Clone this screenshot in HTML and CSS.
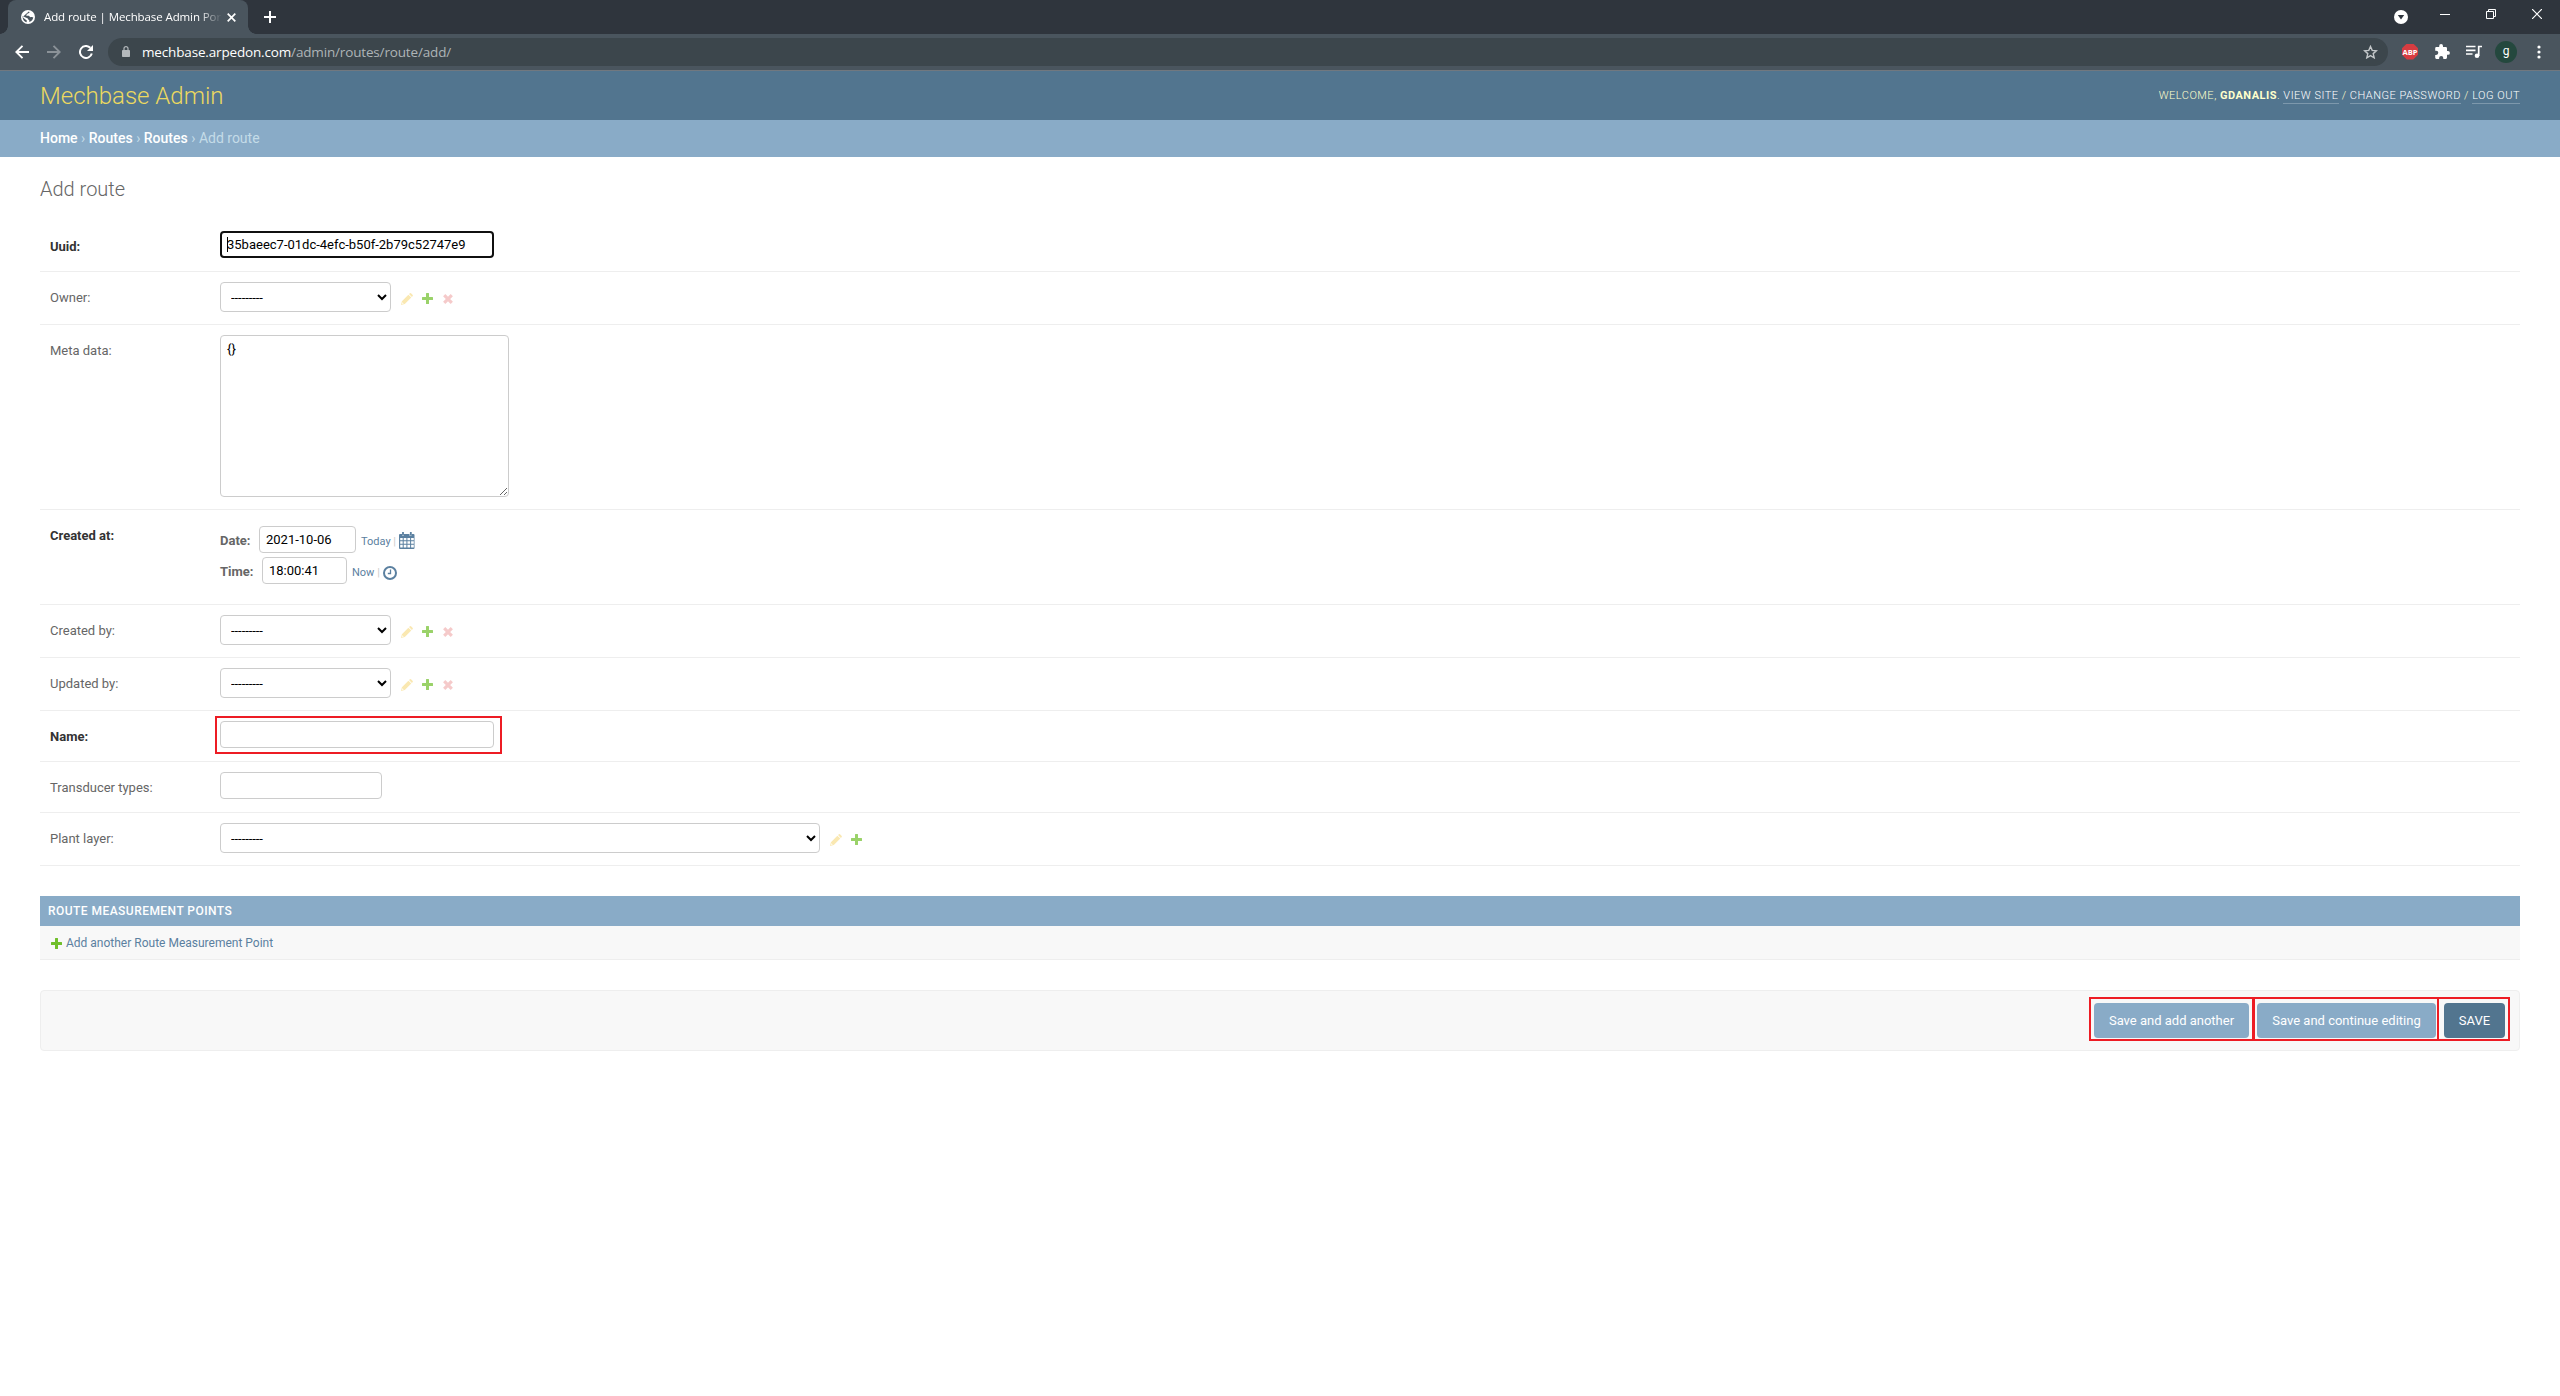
FILE: index.html
```html
<!DOCTYPE html>
<html lang="en">
<head>
<meta charset="utf-8">
<title>Add route | Mechbase Admin Portal</title>
<link rel="stylesheet" href="styles.css">
</head>
<body>
<svg width="0" height="0" class="defs">
  <symbol id="pencil" viewBox="0 0 12 12"><path fill="#efb80b" d="M0 12l.9-3.800L7.400 1.700l2.900 2.900-6.500 6.500zM8 1.100L9 .2q.5-.4 1 0l1.700 1.700q.4.5 0 1l-.8 1z"/><path fill="#fff" d="M1.500 9.300l1.200 1.200-1.200.4-.4-.4z"/></symbol>
  <symbol id="plus" viewBox="0 0 11 11"><path fill="#70bf2b" d="M4 .5q0-.5.500-.5h2q.5 0 .5.500V4h3.500q.5 0 .5.500v2q0 .5-.5.500H7v3.500q0 .5-.5.500h-2q-.5 0-.5-.500V7H.5q-.5 0-.5-.500v-2Q0 4 .5 4H4z"/></symbol>
  <symbol id="cross" viewBox="0 0 10 10"><path stroke="#dd4646" stroke-width="3.200" d="M1.200 1.200l7.600 7.600M8.800 1.200L1.200 8.800"/></symbol>
</svg>

<div class="tabs">
  <div class="tab">
    <svg class="globe" width="14" height="14" viewBox="0 0 14 14"><circle cx="7" cy="7" r="7" fill="#fff"/><path fill="#4a555e" d="M7.800 1.500C9 2.200 8.500 3 7.400 3.200 6 3.500 6.500 4.500 5.400 4.800c-1 .3.200 1.200 1.400 1 1.500-.2 2 .5 2 1.300 1 .2 1.600-.3 2.600.1.600.4.900-.1.900-.1-.2 2.500-1.700 4.400-4 5V10.500c0-1-1.500-.6-1.500-2C6.300 7.600 3.300 7.300 1.600 6 1.300 9.500 3.400 11.600 5.600 12.200L5.800 10.600 3.500 8.800 1.600 7z"/></svg>
    <span class="tab-title">Add route | Mechbase Admin Por</span>
    <svg width="9" height="9" viewBox="0 0 9 9"><path stroke="#fff" stroke-width="1.700" d="M.7.7l7.600 7.600M8.300.7L.7 8.300"/></svg>
  </div>
  <svg class="new-tab" width="12" height="12" viewBox="0 0 12 12"><path stroke="#fff" stroke-width="2" d="M6 0v12M0 6h12"/></svg>
  <div class="window-controls">
    <svg width="14" height="14" viewBox="0 0 14 14"><circle cx="7" cy="7" r="7" fill="#fff"/><path fill="#2f353d" d="M3.800 5h6.400L7 9.500z"/></svg>
    <svg class="up" width="10" height="10" viewBox="0 0 10 10"><path stroke="#fff" d="M0 5.500h10"/></svg>
    <svg class="up" width="10" height="10" viewBox="0 0 10 10"><path fill="none" stroke="#fff" d="M.5 2.500h7v7h-7zM2.500 2.500v-2h7v7h-2"/></svg>
    <svg class="up" width="10" height="10" viewBox="0 0 10 10"><path stroke="#fff" stroke-width="1.200" d="M0 0l10 10M10 0L0 10"/></svg>
  </div>
</div>

<div class="toolbar">
  <svg width="14" height="14" viewBox="0 0 14 14"><path fill="none" stroke="#fff" stroke-width="1.900" d="M14 7H1.500M7.500.8L1.300 7l6.200 6.200"/></svg>
  <svg width="14" height="14" viewBox="0 0 14 14"><path fill="none" stroke="#8b9298" stroke-width="1.900" d="M0 7h12.500M6.500.8L12.700 7l-6.200 6.200"/></svg>
  <svg width="14" height="14" viewBox="0 0 14 14"><path fill="none" stroke="#fff" stroke-width="2" d="M12.800 8.500A6 6 0 1 1 11.300 2.800"/><path fill="#fff" d="M14 0v6H8z"/></svg>
  <div class="address">
    <svg width="8" height="11" viewBox="0 0 8 11"><path fill="none" stroke="#b4b9bc" stroke-width="1.200" d="M2 5V2.600a2 2 0 0 1 4 0V5"/><rect y="4" width="8" height="7" rx=".8" fill="#b4b9bc"/></svg>
    <span class="url"><b>mechbase.arpedon.com</b>/admin/routes/route/add/</span>
    <svg width="15" height="14" viewBox="0 0 15 14"><path fill="none" stroke="#c3c7c9" stroke-width="1.400" d="M7.500 1.500l1.700 3.900 4.200.4-3.200 2.800 1 4.200-3.700-2.200-3.700 2.200 1-4.200-3.200-2.800 4.200-.4z"/></svg>
  </div>
  <div class="abp">ABP</div>
  <svg class="puzzle" width="15" height="15" viewBox="0 0 15 15"><path fill="#fff" d="M13 7h-1V4.200Q12 3 10.800 3H8V1.900a1.900 1.900 0 0 0-3.800 0V3H1.400Q.2 3 .2 4.200v2.500h1a2.100 2.100 0 0 1 0 4.200h-1v2.700Q.2 15 1.400 15h2.700v-1a2.100 2.100 0 0 1 4.200 0v1h2.500q1.200 0 1.200-1.400v-2.800h1a1.900 1.900 0 0 0 0-3.800z"/></svg>
  <svg class="playlist" width="16" height="13" viewBox="0 0 16 13"><path stroke="#fff" stroke-width="1.700" d="M0 1.500h9.500M0 5.300h9.500M0 9h6.500"/><path fill="none" stroke="#fff" stroke-width="1.700" d="M12.700 11V1.500H16"/><circle cx="11" cy="10.700" r="2.300" fill="#fff"/></svg>
  <div class="avatar">g</div>
  <svg class="dots" width="4" height="14" viewBox="0 0 4 14"><g fill="#fff"><circle cx="2" cy="2" r="1.600"/><circle cx="2" cy="7" r="1.600"/><circle cx="2" cy="12" r="1.600"/></g></svg>
</div>

<header class="header">
  <div class="branding">Mechbase Admin</div>
  <div class="user-tools">Welcome, <strong>gdanalis</strong>. <a>View site</a> / <a>Change password</a> / <a>Log out</a></div>
</header>
<nav class="breadcrumbs"><a>Home</a> › <a>Routes</a> › <a>Routes</a> › Add route</nav>

<main class="content">
  <h1>Add route</h1>
  <form>
    <div class="row"><label class="required">Uuid:</label><div class="field focused"><input class="wide" value="35baeec7-01dc-4efc-b50f-2b79c52747e9"></div></div>
    <div class="row tall"><label>Owner:</label><div class="field"><select><option>---------</option></select><span class="related"><svg width="12" height="12"><use href="#pencil"/></svg><svg width="11" height="11"><use href="#plus"/></svg><svg width="10" height="10"><use href="#cross"/></svg></span></div></div>
    <div class="row meta"><label>Meta data:</label><div class="field"><textarea>{}</textarea></div></div>
    <div class="row created"><label class="required">Created at:</label>
      <div class="datetime">
        <div class="line"><b>Date:</b><input class="date" value="2021-10-06"><span class="shortcuts">Today <i>|</i></span>
          <svg class="calendar" width="16" height="17" viewBox="0 0 16 17"><path fill="#5b80a0" d="M1 2h2v1.800h2V2h5.500v1.800h2V2h2q1 0 1 1v13q0 1-1 1H1q-1 0-1-1V3q0-1 1-1z"/><path stroke="#5b80a0" stroke-width="1.800" d="M4 0v3.500M11.800 0v3.500"/><path fill="#fff" d="M1.200 6h2.500v2.200H1.200zM4.700 6h2.700v2.200H4.700zM8.400 6h2.700v2.200H8.400zM12.100 6h2.700v2.200h-2.700zM1.200 9.200h2.500v2.600H1.200zM4.700 9.200h2.700v2.600H4.700zM8.400 9.200h2.700v2.600H8.400zM12.100 9.200h2.700v2.600h-2.700zM1.200 12.800h2.500v2.800H1.200zM4.700 12.800h2.700v2.800H4.700zM8.400 12.800h2.700v2.800H8.400zM12.100 12.800h2.700v2.800h-2.700z"/></svg></div>
        <div class="line"><b class="time-label">Time:</b><input class="time" value="18:00:41"><span class="shortcuts">Now <i>|</i></span>
          <svg class="clock" width="14" height="14" viewBox="0 0 14 14"><circle cx="7" cy="7" r="6" fill="none" stroke="#5b80a0" stroke-width="2"/><path fill="none" stroke="#5b80a0" stroke-width="1.300" d="M7.500 3.500v4H4.800"/></svg></div>
      </div></div>
    <div class="row tall"><label>Created by:</label><div class="field"><select><option>---------</option></select><span class="related"><svg width="12" height="12"><use href="#pencil"/></svg><svg width="11" height="11"><use href="#plus"/></svg><svg width="10" height="10"><use href="#cross"/></svg></span></div></div>
    <div class="row tall"><label>Updated by:</label><div class="field"><select><option>---------</option></select><span class="related"><svg width="12" height="12"><use href="#pencil"/></svg><svg width="11" height="11"><use href="#plus"/></svg><svg width="10" height="10"><use href="#cross"/></svg></span></div></div>
    <div class="row"><label class="required">Name:</label><div class="field marked"><input class="wide"></div></div>
    <div class="row"><label>Transducer types:</label><div class="field"><input class="medium"></div></div>
    <div class="row tall"><label>Plant layer:</label><div class="field"><select class="plant"><option>---------</option></select><span class="related"><svg width="12" height="12"><use href="#pencil"/></svg><svg width="11" height="11"><use href="#plus"/></svg></span></div></div>

    <section class="inline-group">
      <h2>Route measurement points</h2>
      <div class="add-row"><svg width="11" height="11"><use href="#plus"/></svg><a>Add another Route Measurement Point</a></div>
    </section>

    <div class="submit-row">
      <div class="marked another"><button type="button">Save and add another</button></div>
      <div class="marked continue"><button type="button">Save and continue editing</button></div>
      <div class="marked save"><button type="button" class="default">SAVE</button></div>
    </div>
  </form>
</main>
</body>
</html>
```
FILE: styles.css
```css
* { box-sizing: border-box; }
body { margin: 0; background: #fff; color: #333; font: 13px/17px Roboto, sans-serif; }
svg { display: block; flex: none; }
.defs { position: absolute; }

/* browser frame */
.tabs { display: flex; height: 34px; background: #2f353d; padding-left: 8px; font: 12px/16px "Open Sans", sans-serif; }
.tab { position: relative; display: flex; align-items: center; width: 240px; padding: 0 12px 0 13px; background: #4a555e; border-radius: 8px 8px 0 0; color: #fff; }
.tab::before, .tab::after { content: ""; position: absolute; bottom: 0; width: 8px; height: 8px; }
.tab::before { left: -8px; background: radial-gradient(circle at 0 0, #2f353d 7.5px, #4a555e 8px); }
.tab::after { right: -8px; background: radial-gradient(circle at 100% 0, #2f353d 7.5px, #4a555e 8px); }
.tab-title { width: 178px; margin: 0 auto 0 9px; white-space: nowrap; font-size: 11.5px; letter-spacing: -.1px; -webkit-mask-image: linear-gradient(90deg, #000 155px, transparent 178px); mask-image: linear-gradient(90deg, #000 155px, transparent 178px); }
.new-tab { margin: 11px 0 0 16px; }
.window-controls { display: flex; align-items: flex-start; gap: 36px; margin: 10px 18px 0 auto; }
.window-controls .up { margin-top: -1px; }
.window-controls svg:nth-child(2) { margin-left: -4px; }
.toolbar { display: flex; align-items: center; height: 37px; padding: 0 20px 1px 15px; background: #4a555e; border-bottom: 1px solid #71787f; }
.toolbar > svg:nth-child(-n+3) { margin-right: 18px; }
.toolbar > svg.dots { margin-right: -1px; }
.address { display: flex; align-items: center; flex: 1; height: 28px; margin: 0 14px 0 -3px; padding: 0 10px 0 14px; border-radius: 14px; background: #3c464c; }
.url { flex: 1; margin-left: 12px; color: #aeb4b7; font: 13.5px/20px "Open Sans", sans-serif; letter-spacing: -.16px; }
.url b { color: #fff; font-weight: 400; }
.abp { width: 16px; height: 16px; background: #d73c41; color: #fff; font: bold 7.500px/16px "Open Sans", sans-serif; text-align: center; clip-path: polygon(30% 0, 70% 0, 100% 30%, 100% 70%, 70% 100%, 30% 100%, 0 70%, 0 30%); }
.puzzle { margin-left: 17px; }
.playlist { margin-left: 16px; }
.avatar { width: 22px; height: 22px; margin: 0 20px 0 13px; border-radius: 50%; background: #24483e; color: #fff; font-size: 12px; line-height: 21px; text-align: center; }

/* site header */
.header { display: flex; align-items: center; justify-content: space-between; height: 49px; padding: 0 40px; background: #52758f; }
.branding { color: #ecd95f; font-size: 24px; font-weight: 300; line-height: 28px; }
.user-tools { padding-top: 1px; color: #ffc; font-size: 11px; letter-spacing: .5px; text-transform: uppercase; font-weight: 300; line-height: 14px; }
.user-tools strong { font-weight: 700; }
.user-tools a { display: inline-block; border-bottom: 1px solid #7d98ac; color: #fff; }
.breadcrumbs { height: 37px; padding: 10px 40px; background: #89abc7; color: #c4dce8; font-size: 14px; line-height: 16px; }
.breadcrumbs a { color: #fff; font-weight: 500; }

/* form */
.content { padding: 20px 40px; }
h1 { margin: 0 0 20px; padding-top: 1px; color: #666; font-size: 20px; font-weight: 300; line-height: 23px; }
.row { display: flex; align-items: flex-start; height: 51px; padding: 10px; border-bottom: 1px solid #eee; }
.row.tall { height: 53px; }
.row.meta { height: 185px; }
.row.created { height: 95px; }
label { width: 170px; padding-top: 7px; color: #666; }
label.required { color: #333; font-weight: 700; }
.field { position: relative; display: flex; align-items: center; }
input, textarea, select { display: block; margin: 0; border: 1px solid #ccc; border-radius: 4px; background: #fff; color: #000; font: 13px/15px Roboto, sans-serif; outline: 0; }
input { height: 27px; padding: 5px 6px; }
.wide { width: 274px; }
.medium { width: 162px; }
.focused input { border: 2px solid #101010; padding: 3px 5px 4px; }
.focused::after { content: ""; position: absolute; left: 7px; top: 6px; width: 1px; height: 15px; background: #000; }
select { width: 171px; height: 30px; padding: 5px 0 5px 6px; letter-spacing: -.05px; }
select.plant { width: 600px; }
textarea { width: 289px; height: 162px; padding: 5px 6px; resize: both; }
.related { display: flex; align-items: center; gap: 9px; margin: 3px 0 0 10px; opacity: .7; }
.related svg:first-child { opacity: .45; }
.related svg:nth-child(3) { margin-left: 1px; opacity: .4; }
.datetime { display: flex; flex-direction: column; gap: 4px; padding-top: 6px; }
.line { display: flex; align-items: center; color: #666; }
.line b { width: 39px; padding-top: 2px; }
.line .time-label { width: 42px; }
.date { width: 97px; }
.time { width: 85px; }
.shortcuts { margin-left: 5px; padding-top: 3px; color: #5b80a0; font-size: 11px; }
.shortcuts i { color: #ccc; font-style: normal; }
.calendar, .clock { margin: 2px 0 0 3px; }
.clock { margin-top: 4px; }

/* red annotation frames */
.marked { position: relative; }
.marked::before { content: ""; position: absolute; inset: -5px -8px -6px -5px; border: 2px solid #ed1c24; pointer-events: none; }
.submit-row .marked::before { inset: -6px -5px -3px; }
.submit-row .continue::before { right: -3px; left: -4px; }
.submit-row .save::before { left: -7px; }

.inline-group { margin-top: 30px; border-bottom: 1px solid #eee; }
h2 { height: 30px; margin: 0; padding: 7px 8px; background: #89abc7; color: #fff; font-size: 12px; font-weight: 500; letter-spacing: .46px; line-height: 16px; text-transform: uppercase; }
.add-row { display: flex; align-items: center; gap: 4px; height: 33px; padding: 2px 0 0 11px; background: #f8f8f8; color: #5b80a0; font-size: 12px; }
.submit-row { display: flex; justify-content: flex-end; gap: 8px; height: 61px; margin-top: 30px; padding: 12px 14px; border: 1px solid #eee; border-radius: 4px; background: #f8f8f8; }
button { width: 155px; height: 35px; padding: 0; border: 0; border-radius: 4px; background: #89abc7; color: #fff; font: 13px/15px Roboto, sans-serif; }
.continue button { width: 179px; }
button.default { width: 61px; background: #52758f; }
```
